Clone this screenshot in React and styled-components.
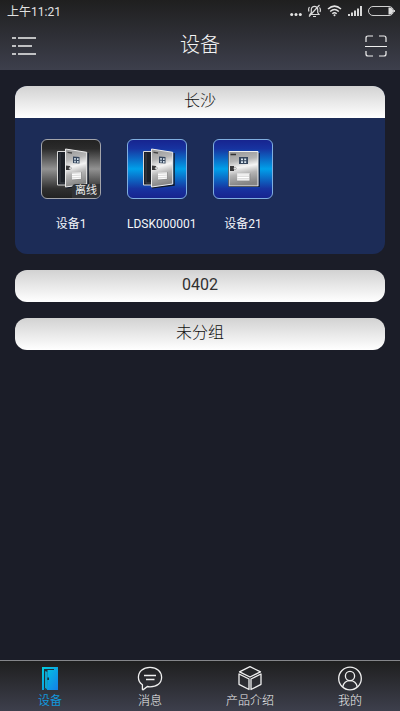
import React, { useId } from "react";
import styled, { createGlobalStyle } from "styled-components";

const GlobalStyle = createGlobalStyle`
  *, *::before, *::after { box-sizing: border-box; }
  body {
    margin: 0;
    background: #1b1d28;
    font-family: Roboto, "Noto Sans CJK SC", sans-serif;
  }
  button { font: inherit; }
`;

const Screen = styled.div`
  min-height: 100vh;
  display: flex;
  flex-direction: column;
`;

const TopBar = styled.header`
  background: linear-gradient(#1f1f1f, #3d3f4c);
  color: #f4f4f4;
`;

const StatusBar = styled.div`
  display: flex;
  align-items: center;
  justify-content: space-between;
  height: 24px;
  padding: 0 5px 0 7px;
`;

const Clock = styled.time`
  font-size: 12px;
  line-height: 24px;
  color: #e2e2e2;
`;

const StatusIcons = styled.div`
  display: flex;
  align-items: center;
  gap: 6px;
  height: 24px;
  padding-bottom: 2px;

  svg { display: block; }
`;

const NavBar = styled.div`
  display: grid;
  grid-template-columns: 48px 1fr 48px;
  align-items: center;
  height: 46px;
`;

const Title = styled.h1`
  margin: 0;
  padding-bottom: 4px;
  text-align: center;
  font-size: 20px;
  line-height: 28px;
  font-weight: 300;
`;

const IconButton = styled.button`
  display: grid;
  place-items: center;
  height: 46px;
  padding: 0 0 2px;
  border: 0;
  background: none;
  color: #f0f0f0;
  cursor: pointer;
`;

const Groups = styled.main`
  flex: 1;
  display: flex;
  flex-direction: column;
  gap: 16px;
  padding: 16px 15px;
`;

const Group = styled.section`
  overflow: hidden;
  border-radius: 12px;
  background: #1c2c57;
`;

const GroupHeader = styled.button`
  display: block;
  width: 100%;
  height: 32px;
  padding: 0 0 3px;
  border: 0;
  background: linear-gradient(#d2d2d2, #ffffff);
  color: ${(p) => (p.$latin ? "#303030" : "#101010")};
  font-size: 16px;
  line-height: 28px;
  font-weight: ${(p) => (p.$latin ? 400 : 300)};
  cursor: pointer;
`;

const Devices = styled.div`
  display: grid;
  grid-template-columns: repeat(auto-fill, 60px);
  gap: 26px;
  padding: 21px 26px;
`;

const Device = styled.button`
  display: block;
  width: 60px;
  padding: 0;
  border: 0;
  background: none;
  color: #f3f5fa;
  cursor: pointer;
`;

const DeviceTile = styled.span`
  position: relative;
  display: block;
  height: 60px;
  overflow: hidden;
  border: 1px solid ${(p) => (p.$offline ? "#a3a5ab" : "#7faee0")};
  border-radius: 6px;
  background: ${(p) =>
    p.$offline
      ? "linear-gradient(#222 0%, #2b2b2b 15%, #929292 50%, #303030 84%, #222 100%)"
      : "linear-gradient(#17248f 0%, #1733a0 15%, #00a0ea 50%, #1733a0 84%, #17248f 100%)"};

  svg { display: block; }
`;

const OfflineBadge = styled.span`
  position: absolute;
  right: 0;
  bottom: 0;
  padding: 0 3px;
  border-radius: 4px 0 4px 0;
  background: #303236;
  color: #ededed;
  font-size: 11px;
  line-height: 14px;
`;

const DeviceName = styled.span`
  display: block;
  padding-top: 16px;
  text-align: center;
  white-space: nowrap;
  font-size: 12px;
  line-height: 18px;
`;

const TabBar = styled.nav`
  display: grid;
  grid-template-columns: repeat(4, 1fr);
  height: 51px;
  border-top: 1px solid #85868a;
  background: linear-gradient(#1f1f1f, #3d3f4c);
`;

const Tab = styled.button`
  display: flex;
  flex-direction: column;
  align-items: center;
  gap: 1px;
  padding: 5px 0 0;
  border: 0;
  background: none;
  color: ${(p) => (p.$active ? "#1296db" : "#f0f0f0")};
  cursor: pointer;
`;

const TabLabel = styled.span`
  font-size: 12px;
  line-height: 16px;
  font-weight: ${(p) => (p.$active ? 400 : 300)};
`;

function Cabinet({ closed }) {
  const id = useId();
  const metal = `url(#${id})`;
  return (
    <svg width="58" height="58" viewBox="1 1 58 58" aria-hidden="true">
      <defs>
        <linearGradient id={id} x1="0" y1="0" x2="0.15" y2="1">
          <stop offset="0" stopColor="#969696" />
          <stop offset="0.3" stopColor="#b5b5b5" />
          <stop offset="0.5" stopColor="#f4f4f4" />
          <stop offset="0.7" stopColor="#b5b5b5" />
          <stop offset="1" stopColor="#858585" />
        </linearGradient>
      </defs>
      {closed ? (
        <g>
          <path d="M17 14H47V48H17Z" fill="#101a32" opacity="0.8" />
          <path d="M16 12.5H45V47H16Z" fill={metal} stroke="#eee" />
          <path d="M15.5 12V47.5H45.5" fill="none" stroke="#444" strokeWidth="0.7" />
          <path d="M17.5 15.5H23" stroke="#333" strokeWidth="1.3" />
          <path d="M26 18H35V25H26Z" fill="#35465d" />
          <path d="M28 19.5h2v1.7h-2zM31.2 19.5h2v1.7h-2zM28 22.3h2V24h-2zM31.2 22.3h2V24h-2z" fill="#d8e4ee" />
          <path d="M24 34H37V42H24Z" fill="#dedede" />
          <path d="M24.5 36H36M24.5 38.5H36M24.5 41H36" stroke="#fff" />
          <path d="M24 42H37V34.5" fill="none" stroke="#888" strokeWidth="0.8" />
          <path d="M17 27H21V32H17Z" fill="#39393b" />
          <circle cx="22" cy="29.5" r="1.3" fill="#eee" stroke="#777" strokeWidth="0.5" />
        </g>
      ) : (
        <g>
          <path d="M16.5 12.5H25V46H16.5Z" fill="#1c2027" stroke="#d8d8d8" />
          <path d="M19 14V44H24" fill="none" stroke="#3c4149" />
          <path d="M25 48.7L47 46V14" fill="none" stroke="#111827" strokeWidth="1.5" />
          <path d="M24.5 10L45.7 13.3V45L24.5 48Z" fill={metal} stroke="#ececec" />
          <path d="M26.5 13.3L31 14" stroke="#444" strokeWidth="1.3" />
          <path d="M32 17.5L38.5 18V24.5L32 24Z" fill="#35465d" />
          <path d="M33.2 19h1.6v1.7h-1.6zM36 19.2h1.6v1.7H36zM33.2 21.8h1.6v1.7h-1.6zM36 22h1.6v1.7H36z" fill="#d8e4ee" />
          <path d="M31 33.5L40.3 33V40L31 40.8Z" fill="#dedede" />
          <path d="M31 35.5L40 35M31 37.7L40 37.2M31 40L40 39.3" stroke="#fff" />
          <path d="M31 41L40.5 40.2V33" fill="none" stroke="#888" strokeWidth="0.7" />
          <path d="M25 26.5L29 27V31L25 31Z" fill="#39393b" />
          <circle cx="29.2" cy="29.2" r="1.2" fill="#eee" stroke="#777" strokeWidth="0.5" />
        </g>
      )}
    </svg>
  );
}

const MenuIcon = () => (
  <svg width="24" height="20" viewBox="0 0 24 20" fill="none" stroke="currentColor" strokeWidth="1.5" aria-hidden="true">
    <path d="M0 2H4M6 2H24M0 10H4M6 10H20M0 18H4M6 18H24" />
  </svg>
);

const ScanIcon = () => (
  <svg width="22" height="22" viewBox="0 0 22 22" fill="none" stroke="currentColor" strokeWidth="1.2" aria-hidden="true">
    <path d="M0 11.5H22M1 7V3Q1 1 3 1H8M14 1H19Q21 1 21 3V7M1 16V19Q1 21 3 21H8M14 21H19Q21 21 21 19V16" />
  </svg>
);

const SignalIcons = () => (
  <StatusIcons aria-hidden="true">
    <svg width="12" height="14" viewBox="0 0 12 14" fill="#e4e4e4">
      <circle cx="1.7" cy="10.5" r="1.5" /><circle cx="6" cy="10.5" r="1.5" /><circle cx="10.3" cy="10.5" r="1.5" />
    </svg>
    <svg width="13" height="14" viewBox="0 0 13 14" fill="none" stroke="#d8d8d8" strokeWidth="1.2">
      <path d="M2 10.5H11L9.7 8.5V5.5A3.2 3.2 0 0 0 3.3 5.5V8.5ZM5 12.5H8M1 12.5L11.5 1M1 7.5Q0 5 1.5 3M12 8Q13 5.5 11.5 3.5" />
    </svg>
    <svg width="15" height="12" viewBox="0 0 15 12" fill="none" stroke="#e4e4e4" strokeWidth="1.5">
      <path d="M1 4Q7.5 -1.8 14 4M3.2 6.5Q7.5 2.6 11.8 6.5M5.3 8.7Q7.5 6.8 9.7 8.7" />
      <circle cx="7.5" cy="10.3" r="1" fill="#e4e4e4" stroke="none" />
    </svg>
    <svg width="14" height="12" viewBox="0 0 14 12" fill="none" stroke="#d8d8d8" strokeWidth="2">
      <path d="M1 11V9M4 11V7.5M7 11V5.5M10 11V3.5M13 11V1" />
    </svg>
    <svg width="27" height="12" viewBox="0 0 27 12" fill="none" stroke="#d0d0d0">
      <rect x="0.5" y="1.5" width="25" height="9" rx="4.5" />
      <path d="M20.5 2.5H22Q25 3 25 6T22 9.5H20.5Z" fill="#e0e0e0" stroke="none" />
      <path d="M26.5 5V7" />
    </svg>
  </StatusIcons>
);

const DoorIcon = () => (
  <svg width="26" height="26" viewBox="0 0 26 26" aria-hidden="true">
    <defs>
      <linearGradient id="door-fill" x1="0" y1="0" x2="1" y2="1">
        <stop offset="0" stopColor="#00cfdf" />
        <stop offset="1" stopColor="#147ee8" />
      </linearGradient>
    </defs>
    <path d="M5 1H21V24H10L7 22.5V24H5Z" fill="url(#door-fill)" />
    <path d="M7 3H17V4H10.5V5.5L10 24L7 22.5Z" fill="#20313d" />
    <path d="M8 5L10.5 6V23.5L8 22Z" fill="#12a5cc" />
    <path d="M10.3 11.5H12V14H10.3Z" fill="#173441" />
  </svg>
);

const ChatIcon = () => (
  <svg width="26" height="26" viewBox="0 0 26 26" fill="none" stroke="currentColor" strokeWidth="1.3" aria-hidden="true">
    <path d="M5.4 18.8C2.8 17 1.4 14.4 1.4 11.3C1.4 5.4 6 1.4 13 1.4S24.6 5.4 24.6 11.3S20 20.8 13 20.8Q11.5 20.8 10.4 20.5L6 23.8Q5.4 24 5.4 23Z" />
    <path d="M7 9.5H19M9 13.5H17.5" />
  </svg>
);

const BoxIcon = () => (
  <svg width="26" height="26" viewBox="0 0 26 26" fill="none" stroke="currentColor" strokeWidth="1.3" strokeLinejoin="round" aria-hidden="true">
    <path d="M13 0.7L23.5 5.8L13 11L2.5 5.8Z" />
    <path d="M2 8L12 13V23.5L2 18.3Z" />
    <path d="M24 8L14 13V23.5L24 18.3Z" />
  </svg>
);

const UserIcon = () => (
  <svg width="26" height="26" viewBox="0 0 26 26" fill="none" stroke="currentColor" strokeWidth="1.3" aria-hidden="true">
    <circle cx="13" cy="12.5" r="11.3" />
    <circle cx="13" cy="10" r="4.6" />
    <path d="M5.7 21Q7 14.6 13 14.6T20.3 21" />
  </svg>
);

const groups = [
  {
    name: "长沙",
    devices: [
      { name: "设备1", offline: true },
      { name: "LDSK000001" },
      { name: "设备21", closed: true },
    ],
  },
  { name: "0402", latin: true },
  { name: "未分组" },
];

const tabs = [
  { label: "设备", Icon: DoorIcon, active: true },
  { label: "消息", Icon: ChatIcon },
  { label: "产品介绍", Icon: BoxIcon },
  { label: "我的", Icon: UserIcon },
];

export default function App() {
  return (
    <Screen lang="zh-CN">
      <GlobalStyle />
      <TopBar>
        <StatusBar>
          <Clock>上午11:21</Clock>
          <SignalIcons />
        </StatusBar>
        <NavBar>
          <IconButton type="button" aria-label="菜单"><MenuIcon /></IconButton>
          <Title>设备</Title>
          <IconButton type="button" aria-label="扫一扫"><ScanIcon /></IconButton>
        </NavBar>
      </TopBar>
      <Groups>
        {groups.map(({ name, latin, devices }) => (
          <Group key={name}>
            <GroupHeader type="button" $latin={latin} aria-expanded={Boolean(devices)}>{name}</GroupHeader>
            {devices && (
              <Devices>
                {devices.map((d) => (
                  <Device type="button" key={d.name}>
                    <DeviceTile $offline={d.offline}>
                      <Cabinet closed={d.closed} />
                      {d.offline && <OfflineBadge>离线</OfflineBadge>}
                    </DeviceTile>
                    <DeviceName>{d.name}</DeviceName>
                  </Device>
                ))}
              </Devices>
            )}
          </Group>
        ))}
      </Groups>
      <TabBar>
        {tabs.map(({ label, Icon, active }) => (
          <Tab type="button" key={label} $active={active} aria-current={active ? "page" : undefined}>
            <Icon />
            <TabLabel $active={active}>{label}</TabLabel>
          </Tab>
        ))}
      </TabBar>
    </Screen>
  );
}
